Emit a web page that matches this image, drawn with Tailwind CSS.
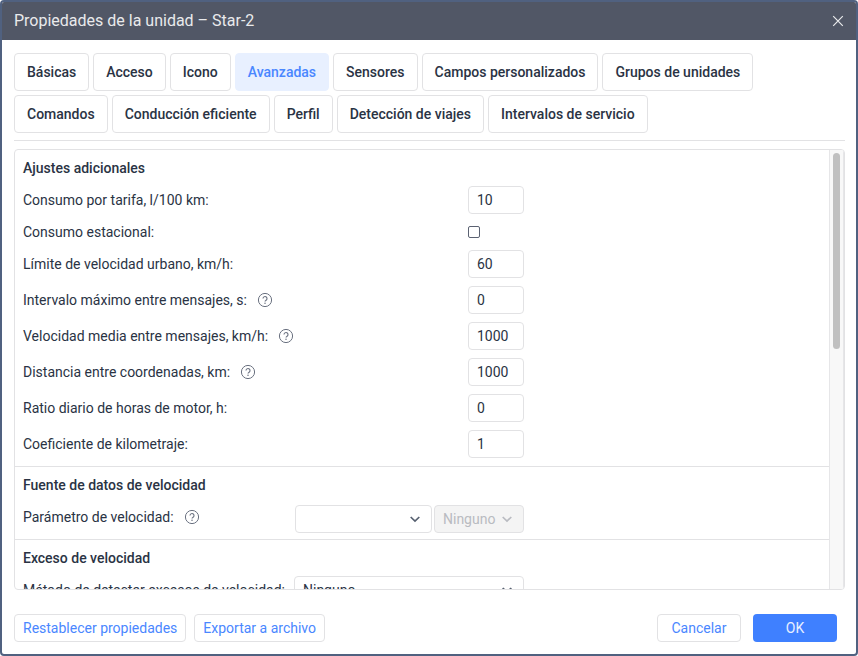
<!DOCTYPE html>
<html lang="es">
<head>
<meta charset="utf-8">
<meta name="viewport" content="width=device-width, initial-scale=1">
<title>Propiedades de la unidad – Star-2</title>
<script src="https://cdn.jsdelivr.net/npm/@tailwindcss/browser@4"></script>
</head>
<body class="bg-white font-[Roboto,'Liberation_Sans',sans-serif] text-sm text-[#2a3344]">
<svg class="hidden" aria-hidden="true">
  <symbol id="help" viewBox="0 0 16 16">
    <circle cx="8" cy="8" r="6.6" fill="none" stroke="currentColor"/>
    <path d="M6 6.6a2 2 0 1 1 3.1 1.6C8.4 8.7 8 9 8 9.6" fill="none" stroke="currentColor" stroke-width="1.1"/>
    <circle cx="8" cy="11.3" r=".75" fill="currentColor"/>
  </symbol>
  <symbol id="chevron" viewBox="0 0 12 12">
    <path d="M1.7 4 6 8l4.300-4" fill="none" stroke="currentColor" stroke-width="1.700"/>
  </symbol>
</svg>
<div role="dialog" aria-labelledby="title" class="flex h-screen flex-col overflow-hidden rounded-sm border-2 border-[#506180] bg-white">
  <header class="flex h-[38px] shrink-0 items-center justify-between bg-[#515766] pr-3 pl-3 text-[#e9eaec]">
    <h1 id="title" class="text-base">Propiedades de la unidad – Star-2</h1>
    <button aria-label="Cerrar" class="flex size-3 items-center justify-center">
      <svg viewBox="0 0 12 12" class="size-3"><path d="M1.200 1.200l9.600 9.600M10.800 1.200l-9.600 9.600" stroke="currentColor" stroke-width="1.200"/></svg>
    </button>
  </header>

  <main class="flex min-h-0 flex-1 flex-col pt-[13px] pr-[11px] pb-3 pl-3">
    <nav class="flex shrink-0 flex-wrap gap-1 border-b border-[#e2e2e4] pb-[7px] font-medium">
      <button class="h-[38px] rounded border border-[#e2e2e4] px-3">Básicas</button>
      <button class="h-[38px] rounded border border-[#e2e2e4] px-3">Acceso</button>
      <button class="h-[38px] rounded border border-[#e2e2e4] px-3">Icono</button>
      <button class="h-[38px] rounded border border-[#e8f0ff] bg-[#e8f0ff] px-3 text-[#4a87ff]">Avanzadas</button>
      <button class="h-[38px] rounded border border-[#e2e2e4] px-3">Sensores</button>
      <button class="h-[38px] rounded border border-[#e2e2e4] px-3">Campos personalizados</button>
      <button class="h-[38px] rounded border border-[#e2e2e4] px-3">Grupos de unidades</button>
      <button class="h-[38px] rounded border border-[#e2e2e4] px-3">Comandos</button>
      <button class="h-[38px] rounded border border-[#e2e2e4] px-3">Conducción eficiente</button>
      <button class="h-[38px] rounded border border-[#e2e2e4] px-3">Perfil</button>
      <button class="h-[38px] rounded border border-[#e2e2e4] px-3">Detección de viajes</button>
      <button class="h-[38px] rounded border border-[#e2e2e4] px-3">Intervalos de servicio</button>
    </nav>

    <div class="mt-2 flex min-h-0 flex-1 overflow-hidden rounded border border-[#e2e2e4]">
      <div class="min-w-0 flex-1 overflow-y-auto [scrollbar-width:none]">
        <section class="border-b border-[#e2e2e4] px-2 pt-2 pb-1">
          <h2 class="mb-1 font-medium">Ajustes adicionales</h2>
          <div class="max-w-[501px]">
            <div class="flex h-9 items-center justify-between">
              <label for="tarifa">Consumo por tarifa, l/100 km:</label>
              <input id="tarifa" value="10" class="h-7 w-14 rounded border border-[#e2e2e4] px-2">
            </div>
            <div class="flex h-7 items-center justify-between">
              <label for="estacional">Consumo estacional:</label>
              <span class="flex w-14"><input id="estacional" type="checkbox" class="size-3 appearance-none rounded-xs border border-[#5b6272] checked:bg-[#3f80ff]"></span>
            </div>
            <div class="flex h-9 items-center justify-between">
              <label for="limite">Límite de velocidad urbano, km/h:</label>
              <input id="limite" value="60" class="h-7 w-14 rounded border border-[#e2e2e4] px-2">
            </div>
            <div class="flex h-9 items-center justify-between">
              <div class="flex items-center gap-2.5"><label for="intervalo">Intervalo máximo entre mensajes, s:</label><svg class="size-4 text-[#6a7180]"><use href="#help"/></svg></div>
              <input id="intervalo" value="0" class="h-7 w-14 rounded border border-[#e2e2e4] px-2">
            </div>
            <div class="flex h-9 items-center justify-between">
              <div class="flex items-center gap-2.5"><label for="media">Velocidad media entre mensajes, km/h:</label><svg class="size-4 text-[#6a7180]"><use href="#help"/></svg></div>
              <input id="media" value="1000" class="h-7 w-14 rounded border border-[#e2e2e4] px-2">
            </div>
            <div class="flex h-9 items-center justify-between">
              <div class="flex items-center gap-2.5"><label for="distancia">Distancia entre coordenadas, km:</label><svg class="size-4 text-[#6a7180]"><use href="#help"/></svg></div>
              <input id="distancia" value="1000" class="h-7 w-14 rounded border border-[#e2e2e4] px-2">
            </div>
            <div class="flex h-9 items-center justify-between">
              <label for="ratio">Ratio diario de horas de motor, h:</label>
              <input id="ratio" value="0" class="h-7 w-14 rounded border border-[#e2e2e4] px-2">
            </div>
            <div class="flex h-9 items-center justify-between">
              <label for="coeficiente">Coeficiente de kilometraje:</label>
              <input id="coeficiente" value="1" class="h-7 w-14 rounded border border-[#e2e2e4] px-2">
            </div>
          </div>
        </section>

        <section class="border-b border-[#e2e2e4] px-2 pt-2 pb-1">
          <h2 class="mb-1 font-medium">Fuente de datos de velocidad</h2>
          <div class="flex h-9 max-w-[501px] items-center justify-between">
            <div class="flex items-center gap-2.5"><label for="parametro">Parámetro de velocidad:</label><svg class="size-4 text-[#6a7180]"><use href="#help"/></svg></div>
            <div class="flex gap-0.5 pt-1">
              <div class="relative">
                <select id="parametro" class="h-7 w-[137px] appearance-none rounded border border-[#e2e2e4] bg-white px-2"><option></option></select>
                <svg class="pointer-events-none absolute top-2 right-[11px] size-3 text-[#566070]"><use href="#chevron"/></svg>
              </div>
              <div class="relative">
                <select aria-label="Unidad del parámetro" disabled class="h-7 w-[90px] appearance-none rounded border border-[#e2e2e4] bg-[#f4f4f4] px-2 text-[#b9bbc1] opacity-100"><option>Ninguno</option></select>
                <svg class="pointer-events-none absolute top-2 right-[11px] size-3 text-[#b9bbc1]"><use href="#chevron"/></svg>
              </div>
            </div>
          </div>
        </section>

        <section class="px-2 pt-2 pb-1">
          <h2 class="mb-1 font-medium">Exceso de velocidad</h2>
          <div class="flex h-9 max-w-[501px] items-center justify-between">
            <label for="metodo">Método de detectar excesos de velocidad:</label>
            <div class="relative">
              <select id="metodo" class="h-7 w-[230px] appearance-none rounded border border-[#e2e2e4] bg-white px-2"><option>Ninguno</option></select>
              <svg class="pointer-events-none absolute top-2 right-[11px] size-3 text-[#566070]"><use href="#chevron"/></svg>
            </div>
          </div>
        </section>
      </div>
      <div class="w-[15px] shrink-0 border-x border-[#e6e6e8] bg-[#f8f8f8] px-[3px] pt-[3px]">
        <div class="h-[45%] rounded-full bg-[#c0c0c0]"></div>
      </div>
    </div>

    <footer class="mt-6 flex shrink-0 items-center gap-2 pr-2 text-[#4a87ff]">
      <button class="h-7 rounded border border-[#e2e2e4] px-2">Restablecer propiedades</button>
      <button class="mr-auto h-7 rounded border border-[#e2e2e4] px-2">Exportar a archivo</button>
      <button class="mr-1 h-7 w-[84px] rounded border border-[#e2e2e4]">Cancelar</button>
      <button class="h-7 w-[84px] rounded bg-[#3f80ff] text-[#e8efff]">OK</button>
    </footer>
  </main>
</div>
</body>
</html>
